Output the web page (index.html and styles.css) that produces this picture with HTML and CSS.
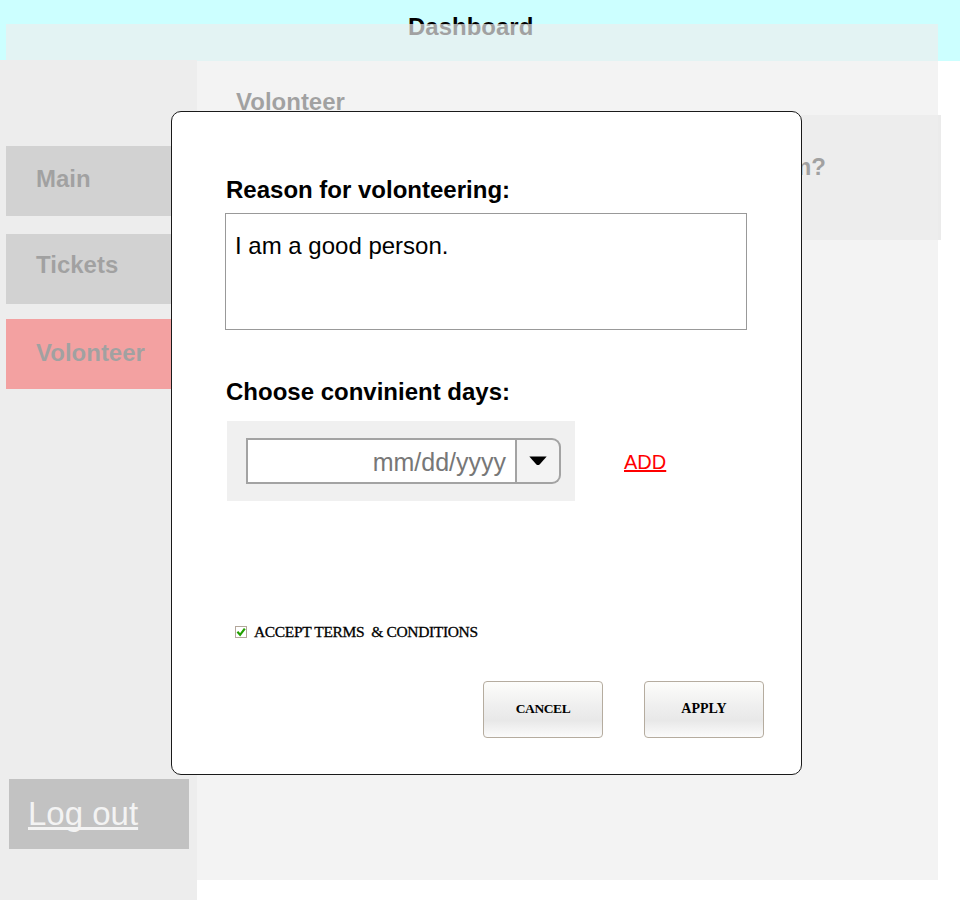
FILE: index.html
```html
<!DOCTYPE html>
<html lang="en">
<head>
<meta charset="utf-8">
<title>Dashboard</title>
<link rel="stylesheet" href="styles.css">
</head>
<body>
<div class="page">
  <header class="topbar">Dashboard</header>
  <div class="body">
    <aside class="sidebar">
      <nav class="nav">
        <a class="nav-item nav-main">Main</a>
        <a class="nav-item nav-tickets">Tickets</a>
        <a class="nav-item nav-active">Volonteer</a>
      </nav>
      <a class="logout">Log out</a>
    </aside>
    <main class="content">
      <h1 class="title">Volonteer</h1>
      <section class="question">m?</section>
    </main>
  </div>
  <div class="veil"></div>
  <form class="modal">
    <label class="label">Reason for volonteering:</label>
    <div class="reason">I am a good person.</div>
    <label class="label label-days">Choose convinient days:</label>
    <div class="days">
      <div class="date-panel">
        <div class="date-input">mm/dd/yyyy</div>
        <div class="date-toggle">
          <svg width="18" height="10" viewBox="0 0 18 10"><path d="M.3 .5h17.4L10.6 8.4Q9 9.8 7.4 8.4z" fill="#000"/></svg>
        </div>
      </div>
      <a class="add">ADD</a>
    </div>
    <div class="terms">
      <svg class="check" width="12" height="12" viewBox="0 0 12 12">
        <rect x=".5" y=".5" width="11" height="11" fill="#fff" stroke="#b3a79b"/>
        <path d="M2.4 5.8l2.7 3L9.8 2.6" fill="none" stroke="#21a000" stroke-width="2.2"/>
      </svg>
      <span class="terms-text">ACCEPT TERMS  &amp; CONDITIONS</span>
    </div>
    <div class="actions">
      <button type="button" class="btn btn-cancel">CANCEL</button>
      <button type="button" class="btn btn-apply">APPLY</button>
    </div>
  </form>
</div>
</body>
</html>
```
FILE: styles.css
```css
* { box-sizing: border-box; }
body {
  margin: 0;
  background: #fff;
  font-family: "Liberation Sans", Arial, sans-serif;
  color: #000;
}
.page {
  position: relative;
  height: 900px;
  overflow: hidden;
  display: flex;
  flex-direction: column;
}
.topbar {
  flex: none;
  height: 61px;
  padding: 13px 0 0 408px;
  background: #cff;
  font-size: 24px;
  font-weight: bold;
  line-height: 28px;
}
.body { flex: 1; display: flex; }
.sidebar {
  width: 197px;
  flex: none;
  display: flex;
  flex-direction: column;
  justify-content: space-between;
  margin-top: -1px;
  padding: 86px 8px 51px 6px;
  background: #ededed;
}
.nav { display: flex; flex-direction: column; }
.nav-item {
  height: 70px;
  padding-left: 30px;
  background: #999;
  font-size: 24px;
  font-weight: bold;
  line-height: 28px;
}
.nav-main { padding-top: 19px; margin-bottom: 18px; }
.nav-tickets { padding-top: 17px; margin-bottom: 15px; }
.nav-active { padding-top: 20px; background: #f00; }
.logout {
  height: 70px;
  margin-left: 3px;
  padding: 16px 0 0 19px;
  background: #666;
  color: #fff;
  font-size: 33px;
  line-height: 38px;
  text-decoration: underline;
  text-decoration-skip-ink: none;
  text-decoration-thickness: 3px;
}
.content { flex: 1; padding: 27px 19px 0 39px; }
.title { margin: 0; font-size: 24px; line-height: 28px; }
.question {
  height: 125px;
  margin: -1px 0 0;
  padding: 38px 115px 0 0;
  background: #ebebeb;
  font-size: 24px;
  font-weight: bold;
  line-height: 28px;
  text-align: right;
}
/* translucent layer that dims the page behind the dialog */
.veil {
  position: absolute;
  left: 5.5px;
  top: 24px;
  width: 932.5px;
  height: 856px;
  background: rgba(237, 237, 237, .68);
}
.modal {
  position: absolute;
  left: 171px;
  top: 111px;
  width: 631px;
  height: 664px;
  padding: 64px 37px 36px 53px;
  display: flex;
  flex-direction: column;
  background: #fff;
  border: 1px solid #1a1a1a;
  border-radius: 10px;
}
.label {
  padding-left: 1px;
  font-size: 24px;
  font-weight: bold;
  line-height: 28px;
}
.reason {
  width: 522px;
  height: 117px;
  margin-top: 9px;
  padding: 18px 9px;
  border: 1px solid #999;
  font-size: 24px;
  line-height: 28px;
}
.label-days { margin-top: 48px; }
.days {
  display: flex;
  align-items: center;
  gap: 49px;
  margin: 15px 0 0 2px;
}
.date-panel {
  display: flex;
  width: 348px;
  height: 80px;
  padding: 17px 14px 17px 19px;
  background: #f0f0f0;
}
.date-input {
  width: 271px;
  border: 2px solid #a3a3a3;
  background: #fff;
  color: #777;
  padding-right: 9px;
  text-align: right;
  font-size: 25px;
  line-height: 45px;
}
.date-toggle {
  width: 44px;
  display: flex;
  align-items: center;
  justify-content: center;
  border: 2px solid #a3a3a3;
  border-left: 0;
  border-radius: 0 9px 9px 0;
  background: #f3f3f3;
}
.add {
  padding-top: 2px;
  color: #f00;
  font-size: 20px;
  line-height: 24px;
  text-decoration: underline;
  text-decoration-thickness: 2px;
}
.terms {
  display: flex;
  align-items: center;
  gap: 7px;
  margin: 122px 0 0 10px;
  height: 18px;
}
.terms-text {
  font-family: "Liberation Serif", "Times New Roman", serif;
  font-size: 15.5px;
  line-height: 18px;
  letter-spacing: -.35px;
  white-space: pre;
  -webkit-text-stroke: .3px #000;
}
.actions {
  display: flex;
  justify-content: flex-end;
  gap: 41px;
  margin-top: auto;
}
.btn {
  width: 120px;
  height: 57px;
  padding: 0 0 2px;
  border: 1px solid #b5ac9f;
  border-radius: 4px;
  background: linear-gradient(#fdfdfb 0%, #f0f0f0 40%, #e8e8e8 70%, #fbfbfb 100%);
  color: #000;
  font: bold 14px/18px "Liberation Serif", "Times New Roman", serif;
}
.btn-cancel { font-size: 13.5px; letter-spacing: -.4px; }
```
